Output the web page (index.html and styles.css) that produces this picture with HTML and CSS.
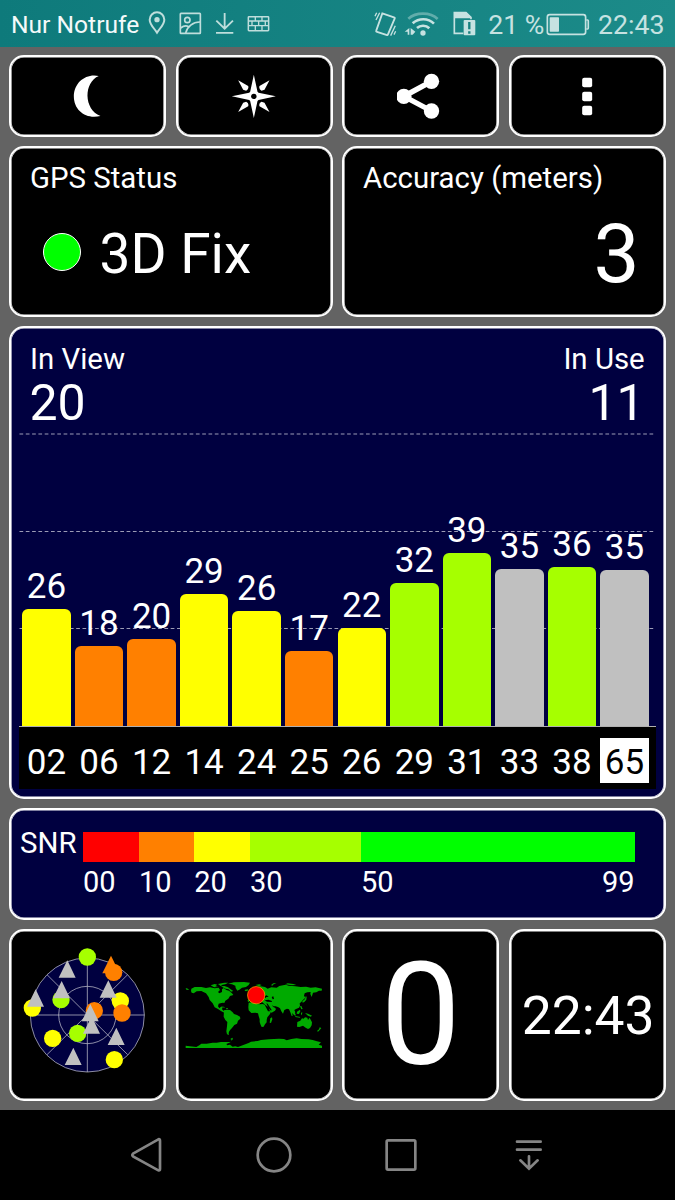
FILE: index.html
```html
<!DOCTYPE html>
<html lang="en">
<head>
<meta charset="utf-8">
<title>GPS Status</title>
<link rel="stylesheet" href="styles.css">
</head>
<body>
<header class="statusbar">
  <span class="carrier">Nur Notrufe</span>
  <svg class="ic-pin" viewBox="444 34 54 70" width="18" height="23.3" fill="none" stroke="#bfdedc" stroke-width="6"><path d="M471 99C461 84 449 74 449 60a22 22 0 0 1 44 0c0 14-12 24-22 39z"/><circle cx="471" cy="60" r="8" fill="#bfdedc" stroke="none"/></svg>
  <svg class="ic-pic" viewBox="538 36 68 68" width="22.7" height="22.7" fill="none" stroke="#bfdedc" stroke-width="5"><rect x="542" y="40" width="60" height="60" rx="2"/><circle cx="563" cy="60" r="8"/><path d="M558 99c4-18 22-34 44-33M543 84c10-8 17-8 24-4"/></svg>
  <svg class="ic-down" viewBox="644 36 58 68" width="19.3" height="22.7" fill="none" stroke="#bfdedc" stroke-width="5.5"><path d="M673 39v46M648 62l25 24 25-24M647 98.500h52"/></svg>
  <svg class="ic-wall" viewBox="740 44 70 50" width="23.3" height="16.7" fill="none" stroke="#bfdedc" stroke-width="4.500"><rect x="744" y="49" width="61" height="42" rx="2"/><path d="M744 62h61M744 76h61M765 49v13M785 49v13M755 62v14M775 62v14M795 62v14M765 76v15M785 76v15" stroke-width="4"/></svg>
  <span class="spacer"></span>
  <svg class="ic-vib" viewBox="114 30 70 78" width="23.3" height="26" fill="none" stroke="#c6e2e1" stroke-width="5.500"><path d="M139 37l35 12c3 1 3 2 2 4l-20 47c-1 3-2 3-5 2l-28-9c-3-1-3-3-2-5z"/><path d="M131 35l-11 22M122 35l-5 11M178 74l-14 30M179 91l-5 10" stroke-width="4"/></svg>
  <svg class="ic-wifi" viewBox="204 32 106 76" width="35.300" height="25.300" fill="none" stroke="#c6e2e1" stroke-width="8"><path d="M217 55c22-20 66-21 88 1" stroke="#61adab"/><path d="M230 69c18-16 46-17 64 1M243 83c10-9 27-9 37 1"/><circle cx="261" cy="98" r="8" fill="#c6e2e1" stroke="none"/><path d="M206 94l14-11v20H215v-9zM238 94l-14-11v20h6z" fill="#c6e2e1" stroke="none"/></svg>
  <svg class="ic-sim" viewBox="352 32 70 76" width="23.300" height="25.300" fill="none" stroke="#c6e2e1" stroke-width="5"><path d="M406 57V51L391 37H356v62h27"/><path d="M355 35h36l14 15v4h-50z" fill="#c6e2e1" stroke="none"/><rect x="384" y="59" width="35" height="46" rx="3" fill="#c6e2e1" stroke="none"/><path d="M401 65v22M401 93v7" stroke="#18807f" stroke-width="7"/></svg>
  <span class="pct">21 %</span>
  <svg class="ic-bat" viewBox="634 38 130 70" width="43.300" height="23.300" fill="none" stroke="#c6e2e1" stroke-width="5"><rect x="638" y="43" width="115" height="59" rx="7"/><path d="M755 59h4q2 0 2 3v21q0 3-2 3h-4"/><rect x="645" y="51" width="28" height="43" rx="2" fill="#c6e2e1" stroke="none"/></svg>
  <span class="clock">22:43</span>
</header>

<main class="board">
  <button class="card" aria-label="Night mode"><svg viewBox="190.500 216 144 144" width="48" height="48"><path d="M295 228C249 246 249 329 300 348C257 359 220 332 220 289C220 247 257 219 295 228z" fill="#fff"/></svg></button>
  <button class="card" aria-label="Compass"><svg viewBox="689.500 216 144 144" width="48" height="48" fill="#fff"><path d="M761 224L772 275L775 278L827 289L775 300L772 303L761 354L750 303L747 300L695 289L747 278L750 275z"/><path d="M808 241L778 258Q775 268 784 272L793 269z M714 241L744 258Q747 268 738 272L729 269z M808 336L778 319Q775 309 784 305L793 308z M714 336L744 319Q747 309 738 305L729 308z"/><circle cx="761" cy="289" r="8" fill="#000"/></svg></button>
  <button class="card" aria-label="Share"><svg viewBox="185.500 216 144 144" width="48" height="48" fill="#fff"><path d="M289 244L206 289L289 333" fill="none" stroke="#fff" stroke-width="16"/><circle cx="206" cy="289" r="23"/><circle cx="289" cy="244" r="23"/><circle cx="289" cy="333" r="23"/></svg></button>
  <button class="card" aria-label="Menu"><svg viewBox="683.500 216 144 144" width="48" height="48" fill="#fff"><rect x="741" y="233" width="30" height="29" rx="6"/><rect x="741" y="275" width="30" height="29" rx="6"/><rect x="741" y="317" width="30" height="29" rx="6"/></svg></button>

  <section class="card info half">
    <h2>GPS Status</h2>
    <p class="fix"><i class="led"></i>3D Fix</p>
  </section>
  <section class="card info half">
    <h2>Accuracy (meters)</h2>
    <p class="accuracy">3</p>
  </section>

  <section class="card info navy full">
    <div class="counts">
      <div><h2>In View</h2><p>20</p></div>
      <div class="right"><h2>In Use</h2><p>11</p></div>
    </div>
    <div class="plot">
      <svg class="gridlines" viewBox="0 0 636 298" width="636" height="298" stroke="#9c9cb6" stroke-width="1.200" stroke-dasharray="3.700 2.600"><path d="M.5 6h635M.5 103.500h635M.5 200.500h635"/></svg>
      <div class="bar y" style="height:117.200px"><b>26</b></div>
      <div class="bar o" style="height:80.200px"><b>18</b></div>
      <div class="bar o" style="height:86.700px"><b>20</b></div>
      <div class="bar y" style="height:131.500px"><b>29</b></div>
      <div class="bar y" style="height:115px"><b>26</b></div>
      <div class="bar o" style="height:75px"><b>17</b></div>
      <div class="bar y" style="height:97.500px"><b>22</b></div>
      <div class="bar g" style="height:143.200px"><b>32</b></div>
      <div class="bar g" style="height:173.200px"><b>39</b></div>
      <div class="bar s" style="height:157.200px"><b>35</b></div>
      <div class="bar g" style="height:158.500px"><b>36</b></div>
      <div class="bar s" style="height:155.500px"><b>35</b></div>
    </div>
    <div class="ids"><span>02</span><span>06</span><span>12</span><span>14</span><span>24</span><span>25</span><span>26</span><span>29</span><span>31</span><span>33</span><span>38</span><span class="sel">65</span></div>
  </section>

  <section class="card navy full snr">
    <h2>SNR</h2>
    <div class="scale">
      <span class="seg r">00</span><span class="seg o">10</span><span class="seg y">20</span><span class="seg g">30</span><span class="seg gg">50</span><span class="max">99</span>
    </div>
  </section>

  <section class="card">
    <svg viewBox="60 76 405 420" width="135" height="140">
      <g fill="none" stroke="#c0c0cc" stroke-width="2.200"><circle cx="262" cy="286" r="171" fill="#000040"/><circle cx="262" cy="286" r="86"/><path d="M262 115v342M91 286h342M141 165l242 240M141 405l242-240"/></g>
      <g fill="#a6ff00"><circle cx="262" cy="112" r="26"/><circle cx="183" cy="240" r="26"/><circle cx="233" cy="341" r="26"/></g>
      <g fill="#ffff00"><circle cx="361" cy="244" r="26"/><circle cx="97" cy="265" r="26"/><circle cx="158" cy="356" r="26"/><circle cx="343" cy="420" r="26"/></g>
      <g fill="#ff8000"><circle cx="341" cy="158" r="26"/><path d="M333 108l26 53h-52z"/><circle cx="283" cy="273" r="26"/><circle cx="366" cy="280" r="26"/></g>
      <g fill="#c0c0c0"><path d="M202 122l25 52h-51zM185 184l25 52h-51zM107 209l25 52h-51zM325 182l25 52h-51zM275 290l25 52h-51zM271 253l25 52h-51zM349 324l25 52h-51zM220 384l25 52h-51z"/></g>
    </svg>
  </section>
  <section class="card">
    <svg class="map" viewBox="0 0 432 228" width="144" height="76" fill="#00aa00">
      <path d="M11 33l7 2 3 4-8-1zM28 35l10-5 20 0 14 3 12-2 14 3 12-2 4 7-6 6 4 4 8-4 0-8 5-4 8 6 8 2 9 8 4 5-10 3-5 8-9 6-3 7-4-1-5 1-8 2-2 8 4 6 5-5 5 0-2 8 5 4 6 4-2 3-11-5-10-7-10-5-6-12-9-10-3-9-8-11-14-7-14 1-9 6-6-2-2-5z"/>
      <path d="M86 25l12-4 8 2-6 5 9 2-13 1zM108 21l11-2 8-2 12 0-9 5-8 1-6 4zM117 28l10-1 11 4 8 6 8 5-7 2-7-7-9-2-5-2zM138 20l18-4 30-1 18 2-4 7-8 6-12 2-8 6-6 3-5-8-1-7-10-4z"/>
      <path d="M117 89l9 0 3 3-8-1zM132 93l6 1v2l-6-1zM126 100l8-2 10 1 8 7 4 5 9 3 9 5 1 6-7 6-3 9-8 4-7 9-5 5-4 6-1 5 1 5-6-2-2-9 2-15 1-13-6-6-5-10z"/>
      <path d="M189 38l8-1 3 3-8 3-4-2zM198 51l4-1 3 7-6 1zM220 24l12-2 7 2-8 4z"/>
      <path d="M212 36L227 30 236 28 249 30 257 35 268 31 284 32 292 27 303 25 311 23 320 26 340 28 356 30 372 29 386 32 401 31 420 35 419 41 411 41 403 46 393 47 389 60 385 51 386 45 376 46 368 49 366 56 370 62 362 70 357 76 353 79 354 86 351 92 342 96 337 99 340 106 337 111 330 105 332 117 329 117 325 106 321 97 315 95 307 99 303 110 298 103 294 94 288 90 280 88 275 88 282 96 279 101 269 107 265 105 259 90 250 84 246 80 241 76 222 76 216 70 203 72 198 76 197 69 205 64 213 60 212 50z"/>
      <path d="M200 77l11-1 9-1 5 6 9 1 8-1 6 2 5 10 5 10 9 0-3 8-8 10-2 8 0 7-5 6-4 7-6 1-3-6-3-9 0-8-3-10-2-8-8-2-12 1-8-8-1-9z"/>
      <path d="M265 124l5-3 1 6-4 11-4-1zM328 96l5 4 8 12-1 5-8-7-5-8zM345 104l9-6 1 5-4 8-7-1zM357 107l4-1-1 6-3 3zM369 108l9 2 12 6-4 3-8-3zM340 117l15 3-2 2-13-2zM361 73l8-7 2-8 3 1-1 9-6 7-5 2zM354 88l4-1 4 9-4 1zM346 135l9-4 5-7 5 1 4-4 7 1 2 7 5-7 3 6 4 8-1 9-5 8-6 3-7-4-8-6-11 4-7-1zM413 151l5 2-4 5-6 6-3-2 6-5z"/>
      <path d="M310 22l7-3 17 2 9 3-14 1zM268 23l6-4 9-1-10 5-3 5z"/>
      <path d="M11 206v7h409v-7l-10-3 7-7-12-3-13-4-12-2-22-1-14-2-16 2-14 4-8-4-15-1-30 2-24 2-10 3-20 2-7 4-18 7-14 5-8-2-8 1-8-6-8 2-3-4 12-5 4-7-4-3 6-4 2 4-8 9-28 0-13 2-12 0-18 3-16 0-6 5-9 5z"/>
      <path d="M246 58l8-3 6 5-7 0-3 3-4-1zM248 70l11-2 11 4-1 3-14-1zM269 60l5-2 2 8-4 1zM253 79l4 1 12 19-2 2-8-9zM271 84l5 5 7 0-1 3-9-2z" fill="#000"/>
      <circle cx="222.500" cy="54.500" r="26" fill="#f00" stroke="#ffb000" stroke-width="2"/>
    </svg>
  </section>
  <section class="card big">0</section>
  <section class="card time">22:43</section>
</main>

<nav class="navbar">
  <svg viewBox="86 108 104 114" width="34.700" height="38" ><path d="M98 161L174 118q5-2 5 4v85q0 6-5 4L98 169q-4-4 0-8z"/></svg>
  <svg viewBox="464 108 114 114" width="38" height="38"><circle cx="521" cy="165" r="49"/></svg>
  <svg viewBox="847 108 114 114" width="38" height="38"><rect x="861" y="121" width="86" height="88" rx="4"/></svg>
  <svg viewBox="1230 108 114 114" width="38" height="38" stroke-linecap="round"><path d="M1251 125h71M1251 149h71M1287 169v36M1261 181l26 25 26-25"/></svg>
</nav>
</body>
</html>
```
FILE: styles.css
```css
* { box-sizing: border-box; }

body {
  margin: 0;
  width: 675px;
  height: 1200px;
  display: flex;
  flex-direction: column;
  overflow: hidden;
  background: #636363;
  color: #fff;
  font-family: Roboto, sans-serif;
}

h2, p { margin: 0; font-weight: 400; }

svg { display: block; flex: none; }

/* Status bar */
.statusbar {
  flex: none;
  height: 47px;
  padding: 3px 11px 0 11px;
  display: flex;
  align-items: center;
  background: linear-gradient(90deg, #0e7a7b, #1c8b89);
  font-size: 26.700px;
  color: #c6e2e1;
  white-space: nowrap;
}
.carrier { width: 137px; margin-top: -2px; font-size: 24.600px; color: #f4fafa; }
.ic-pin { margin-top: -4px; }
.ic-pic { margin: -3px 0 0 13.3px; }
.ic-down { margin: -3px 0 0 12.700px; }
.ic-wall { margin: -3px 0 0 12.700px; }
.spacer { flex: 1; }
.ic-vib { margin: -3px 6px 0 0; }
.ic-wifi { margin: -3px 14px 0 0; }
.ic-sim { margin: -3px 12px 0 0; }
.pct { width: 58px; }
.ic-bat { margin: -1px 8.500px 0 0; }
.clock { width: 66px; }

/* Cards */
.board {
  flex: none;
  height: 1063px;
  padding: 8.3px 9.3px 0 9px;
  display: grid;
  grid-template-columns: repeat(4, 1fr);
  grid-template-rows: 81.400px 171.800px 472.700px 111.900px 172px;
  gap: 8.900px 9.400px;
}
.card {
  min-width: 0;
  margin: 0;
  padding: 0;
  display: flex;
  align-items: center;
  justify-content: center;
  border: 2px solid #fff;
  border-radius: 15px;
  background: #000;
  box-shadow: inset 0 0 0 .6px #fff;
  color: #fff;
  font-family: inherit;
}
.half { grid-column: span 2; }
.full { grid-column: span 4; }
.navy { background: #000040; }

.info {
  flex-direction: column;
  align-items: stretch;
  justify-content: flex-start;
  padding-top: 14px;
}
.info.half { padding-top: 13px; }
.info h2 { margin: 0 19px; font-size: 29.400px; line-height: 34px; white-space: nowrap; }

.fix {
  margin: 29px 0 0 32px;
  display: flex;
  align-items: center;
  font-size: 55px;
  line-height: 60px;
}
.led {
  width: 38px;
  height: 38px;
  margin: -4px 18.500px 0 0;
  border: 1px solid #fff;
  border-radius: 50%;
  background: #0f0;
}
.accuracy { margin: 18px 24px 0 0; font-size: 82px; line-height: 82px; text-align: right; }

/* Satellite chart */
.counts { display: flex; justify-content: space-between; }
.counts p { margin: 1.500px 19px 0 18.500px; font-size: 50px; line-height: 50px; }
.right { text-align: right; }

.plot {
  position: relative;
  height: 298px;
  margin: 0 8px;
  padding: 0 7px 0 3.300px;
  display: grid;
  grid-template-columns: repeat(12, 1fr);
  column-gap: 4.200px;
  align-items: end;
}
.gridlines { position: absolute; left: 0; top: 0; }
.bar {
  position: relative;
  display: flex;
  justify-content: center;
  border-radius: 6px 6px 0 0;
}
.bar b {
  margin-top: -42px;
  height: 40px;
  font-size: 35px;
  line-height: 40px;
  font-weight: 400;
}
.r { background: #f00; }
.o { background: #ff8000; }
.y { background: #ff0; }
.g { background: #a6ff00; }
.gg { background: #0f0; }
.s { background: #c0c0c0; }

.ids {
  position: relative;
  height: 63px;
  margin: 0 8px;
  padding: 11.500px 7px 0 3.300px;
  display: grid;
  grid-template-columns: repeat(12, 1fr);
  column-gap: 4.200px;
  align-items: start;
  border-top: 1.500px solid #b0b0b0;
  background: #000;
  font-size: 35px;
  line-height: 50px;
  text-align: center;
}
.ids span { height: 44.500px; }
.sel { background: #fff; color: #000; }

/* SNR legend */
.snr { align-items: flex-start; justify-content: flex-start; padding: 22px 0 0 9px; font-size: 29px; }
.snr h2 { width: 63px; margin-top: -4px; font-size: 29.400px; line-height: 30px; }
.scale {
  position: relative;
  display: grid;
  grid-template-columns: 56px 55.300px 55.700px 111px 273.700px;
}
.seg { height: 30px; line-height: 34px; }
.seg::before { content: ""; display: block; height: 33px; }
.max { position: absolute; right: 0; top: 33px; line-height: 34px; }

.big { padding-top: 2px; font-size: 143px; line-height: 143px; }
.time { padding: 1px 0 0 2px; font-size: 53.400px; }

/* Navigation bar */
.navbar {
  flex: 1;
  display: grid;
  grid-template-columns: repeat(4, 127.700px);
  justify-content: center;
  justify-items: center;
  align-items: center;
  background: #000;
}
.navbar svg { fill: none; stroke: #858585; stroke-width: 8; }
```
